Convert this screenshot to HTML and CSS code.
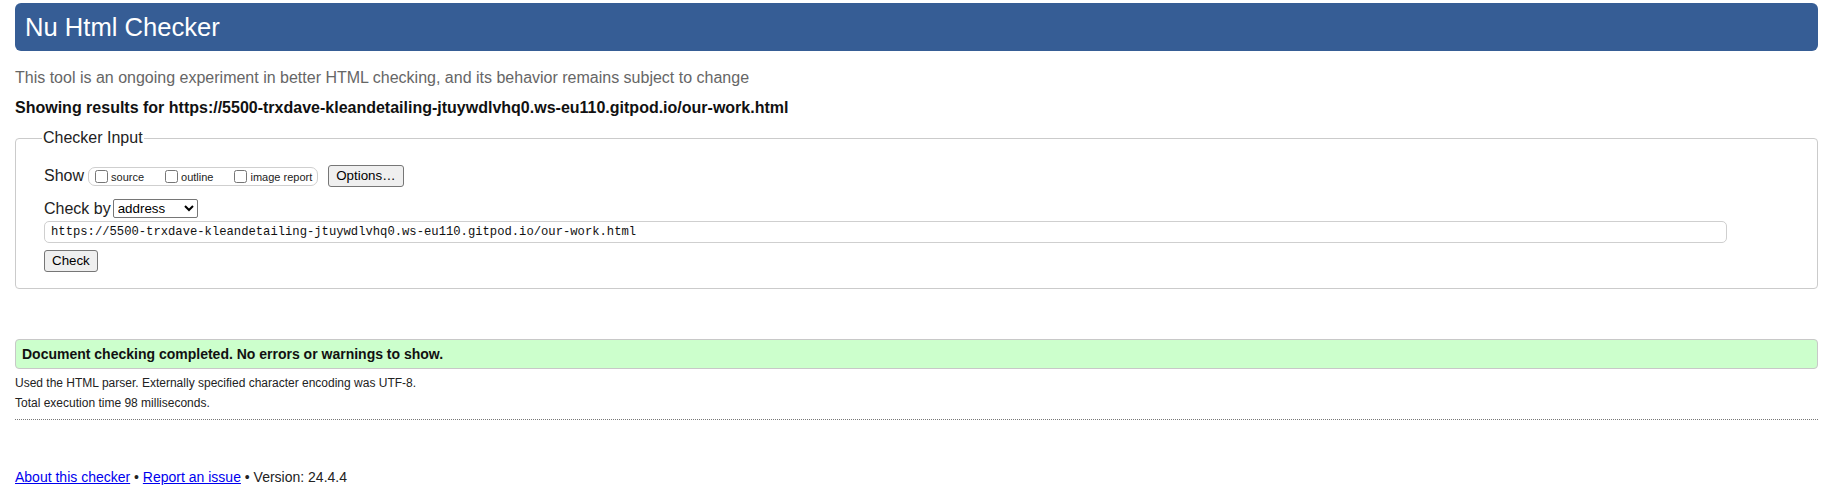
FILE: index.html
```html
<!DOCTYPE html>
<html lang="en">
<head>
<meta charset="utf-8">
<title>Nu Html Checker</title>
<link rel="stylesheet" href="styles.css">
</head>
<body>
<header class="banner">
  <h1 class="title">Nu Html Checker</h1>
</header>
<p class="intro">This tool is an ongoing experiment in better HTML checking, and its behavior remains subject to change</p>
<p class="showing">Showing results for https://5500-trxdave-kleandetailing-jtuywdlvhq0.ws-eu110.gitpod.io/our-work.html</p>
<form class="checker">
  <fieldset class="input-box">
    <legend class="input-legend">Checker Input</legend>
    <div class="rows">
      <div class="row show-row">
        <span class="row-label">Show</span>
        <span class="opts">
          <label class="opt"><input type="checkbox" class="cb"><span class="opt-text">source</span></label>
          <label class="opt"><input type="checkbox" class="cb"><span class="opt-text">outline</span></label>
          <label class="opt opt-last"><input type="checkbox" class="cb"><span class="opt-text">image report</span></label>
        </span>
        <button type="button" class="btn opt-btn">Options…</button>
      </div>
      <div class="row by-row">
        <span class="row-label">Check by</span>
        <select class="by-select"><option>address</option></select>
      </div>
      <div class="row url-row">
        <input class="url" type="text" value="https://5500-trxdave-kleandetailing-jtuywdlvhq0.ws-eu110.gitpod.io/our-work.html">
      </div>
      <div class="row submit-row">
        <button type="button" class="btn">Check</button>
      </div>
    </div>
  </fieldset>
</form>
<div class="success">Document checking completed. No errors or warnings to show.</div>
<p class="details details-first">Used the HTML parser. Externally specified character encoding was UTF-8.</p>
<p class="details">Total execution time 98 milliseconds.</p>
<hr class="rule">
<p class="footer"><a class="link" href="#">About this checker</a> • <a class="link" href="#">Report an issue</a> • Version: 24.4.4</p>
</body>
</html>
```
FILE: styles.css
```css
html, body {
  background: #fff;
}
body {
  margin: 0;
  padding: 3px 5px 0 15px;
  font-family: "Liberation Sans", Arial, sans-serif;
  color: #111;
}
.banner {
  margin: 0;
}
.title {
  margin: 0;
  height: 48px;
  line-height: 48px;
  padding: 0 0 0 10px;
  background: #365d95;
  color: #fff;
  font-size: 25.6px;
  font-weight: normal;
  border-radius: 6px;
}
.intro {
  margin: 18px 0 0;
  font-size: 16px;
  line-height: 18px;
  color: #666;
}
.showing {
  margin: 12px 0 0;
  font-size: 16px;
  line-height: 18px;
  font-weight: bold;
  color: #111;
}
.checker {
  margin: 0;
}
.input-box {
  margin: 12px 0 0;
  padding: 0 0 16px 26px;
  border: 1px solid #cbcbcb;
  border-radius: 4px;
  min-width: 0;
}
.input-legend {
  padding: 0 1px;
  font-size: 16px;
  line-height: 18px;
  color: #222;
}
.rows {
  padding: 18px 0 0 2px;
  display: flex;
  flex-direction: column;
}
.row {
  display: flex;
  align-items: center;
}
.row-label {
  font-size: 16px;
  line-height: 18px;
  color: #222;
}
.show-row {
  height: 22px;
}
.opts {
  display: inline-flex;
  align-items: center;
  box-sizing: border-box;
  height: 19px;
  margin-left: 4px;
  padding: 0 5px 0 2px;
  border: 1px solid #cfcfcf;
  border-radius: 7px;
}
.opt {
  display: inline-flex;
  align-items: center;
  font-size: 11px;
  line-height: 13px;
  color: #222;
  margin-right: 17px;
}
.opt-text {
  padding-top: 2px;
}
.opt-last {
  margin-right: 0;
}
.cb {
  width: 13px;
  height: 13px;
  margin: 0 3px 0 4px;
}
.btn {
  box-sizing: border-box;
  height: 22px;
  padding: 2px 7px;
  border: 1px solid #767676;
  border-radius: 3px;
  background: #efefef;
  color: #000;
  font-family: "Liberation Sans", Arial, sans-serif;
  font-size: 13.33px;
  line-height: 16px;
}
.opt-btn {
  margin-left: 10px;
}
.by-row {
  margin-top: 12px;
  height: 19px;
}
.by-select {
  box-sizing: border-box;
  width: 85px;
  height: 19px;
  margin-left: 2px;
  font-family: "Liberation Sans", Arial, sans-serif;
  font-size: 13.33px;
  border: 1px solid #767676;
  border-radius: 2px;
  background: #fff;
  color: #000;
}
.url-row {
  margin-top: 3px;
}
.url {
  box-sizing: border-box;
  width: calc(100% - 90px);
  height: 22px;
  margin: 0;
  padding: 0 6px;
  border: 1px solid #cfcfcf;
  border-radius: 5px;
  font-family: "Liberation Mono", "DejaVu Sans Mono", monospace;
  font-size: 12.2px;
  color: #111;
  background: #fff;
}
.submit-row {
  margin-top: 7px;
}
.success {
  margin-top: 50px;
  box-sizing: border-box;
  height: 30px;
  line-height: 28px;
  padding: 0 6px;
  border: 1px solid #c8c8c8;
  border-radius: 4px;
  background: #ccffcc;
  font-size: 14px;
  font-weight: bold;
  color: #111;
}
.details {
  margin: 6px 0 0;
  font-size: 12px;
  line-height: 14px;
  color: #222;
}
.details-first {
  margin-top: 7px;
}
.rule {
  margin: 9px 0 0;
  height: 0;
  border: 0;
  border-top: 1px dotted #777;
}
.footer {
  margin: 49px 0 0;
  font-size: 14px;
  line-height: 16px;
  color: #222;
}
.link {
  color: #0000ee;
  text-decoration: underline;
}
```
